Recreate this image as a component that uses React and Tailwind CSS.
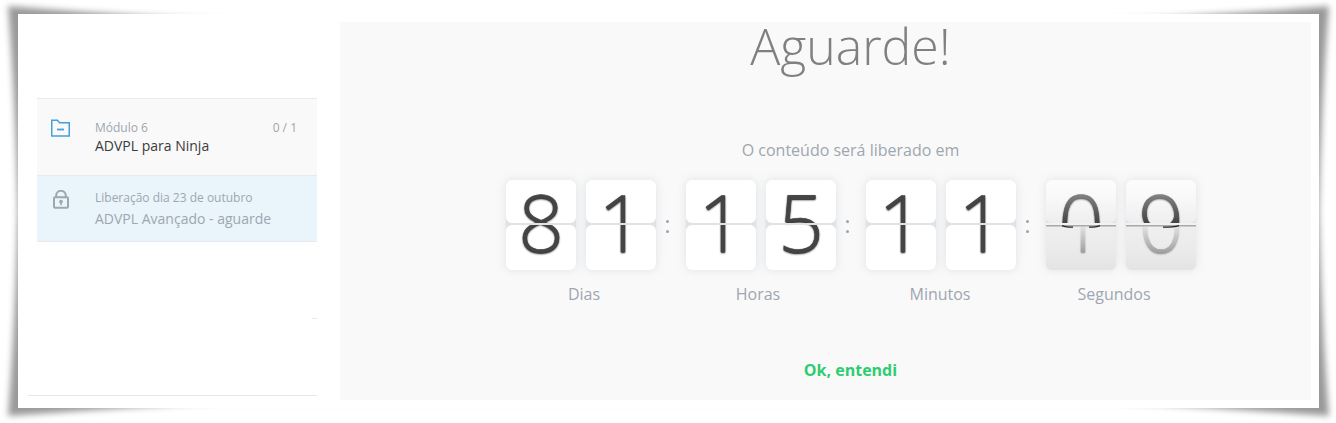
import clsx from "clsx";

const groups = [
  { label: "Dias", digits: ["8", "1"], labelClass: "pl-[6px]" },
  { label: "Horas", digits: ["1", "5"], labelClass: "pr-[6px]" },
  { label: "Minutos", digits: ["1", "1"], labelClass: "pr-[2px]" },
  { label: "Segundos", flipping: true, digits: ["0", "9"], next: ["1", "0"], labelClass: "pr-[14px]" },
];

const digitText =
  "block h-[90px] w-[70px] shrink-0 text-center text-[80px] leading-[82px] font-light text-[#444] [text-shadow:0_1px_2px_#000] [-webkit-text-stroke:0.6px_#444]";

// ─── Page curl shadow ─────────────────────────────────────────────────────────
function CurlShadow() {
  return (
    <svg className="absolute inset-0 h-full w-full" viewBox="0 0 1336 423">
      <defs>
        <filter id="soft" x="-5%" y="-5%" width="110%" height="110%">
          <feGaussianBlur stdDeviation="3" />
        </filter>
      </defs>
      <path
        d="M8 6 Q90 13 220 20 H1116 Q1246 13 1329 6 Q1322 90 1319 211 Q1322 330 1329 416 Q1246 410 1116 402 H220 Q90 410 8 416 Q15 330 18 211 Q15 90 8 6Z"
        fill="#000"
        fillOpacity="0.4"
        filter="url(#soft)"
      />
    </svg>
  );
}

// ─── Flip card ────────────────────────────────────────────────────────────────
function FlipCard({ digit, next, flipping }) {
  return (
    <div className="relative h-[90px] w-[70px] rounded-md bg-[#dfe3e7] shadow-[0_0_10px_rgba(150,165,180,0.25)]">
      <div
        className={clsx(
          "h-[43px] overflow-hidden rounded-md",
          flipping ? "bg-linear-to-b from-[#fafafa] to-[#eeeeee]" : "bg-white"
        )}
      >
        <span className={digitText}>{digit}</span>
      </div>
      <div
        className={clsx(
          "mt-[2px] flex h-[45px] flex-col justify-end overflow-hidden rounded-md",
          flipping ? "bg-linear-to-b from-[#f1f1f1] to-[#e3e3e3]" : "bg-white"
        )}
      >
        <span className={digitText}>{next ?? digit}</span>
      </div>
      {flipping && (
        <>
          <div className="absolute inset-x-0 top-0 h-[43px] rounded-t-md bg-linear-to-b from-white/50 to-transparent" />
          <div className="absolute inset-x-0 top-[45px] h-[45px] rounded-b-md bg-linear-to-b from-[#eee]/95 to-[#e4e4e4]/30" />
          <div className="absolute inset-x-0 top-[43px] h-[4px] border-t-2 border-b border-t-[#f2f2f2] border-b-[#c9c9c9] bg-[#aaa]" />
          {/* lower half of the falling leaf, almost edge-on */}
          <svg className="absolute top-[45px] left-0 h-[3px] w-[70px]" viewBox="0 0 70 3" fill="none" stroke="#222" strokeWidth="1.2">
            {digit === "0" ? <path d="M16 .6Q20 2.2 27 2.2M43 2.2Q50 2.2 54 .6" /> : <path d="M37 2.2Q48 2.2 53 .6" />}
          </svg>
        </>
      )}
    </div>
  );
}

function Separator() {
  return (
    <div className="flex w-[30px] flex-col items-start gap-[7px] pt-[40px] pl-[10px]">
      <i className="size-[3px] rounded-full bg-[#9aa4b0]" />
      <i className="size-[3px] rounded-full bg-[#9aa4b0]" />
    </div>
  );
}

// ─── Sidebar ──────────────────────────────────────────────────────────────────
function Sidebar() {
  return (
    <aside className="flex w-[322px] shrink-0 flex-col pt-[84px]">
      <div className="ml-[19px] w-[280px] border-y border-[#e8eaef] text-[#9ea6b0]">
        <div className="flex h-[77px] border-b border-[#e6eaef] bg-[#f9f9f9] pt-[20px]">
          <svg className="ml-[14px] h-[18px] w-[19px]" viewBox="0 0 19 18" fill="none" stroke="#459fdb" strokeWidth="1.5">
            <path d="M.75 1.25H6.5L8.5 3.75H18.25V17H.75Z" />
            <path d="M6 10.5H13" strokeWidth="1.8" />
          </svg>
          <div className="ml-[25px] flex-1">
            <div className="flex justify-between pr-5 text-[12px] leading-[18px]">
              <span>Módulo 6</span>
              <span>0 / 1</span>
            </div>
            <p className="text-[14px] leading-[18px] text-[#3b3b3b]">ADVPL para Ninja</p>
          </div>
        </div>
        <div className="flex h-[65px] bg-[#e9f4fb] pt-[14px]">
          <svg className="ml-[16px] h-[19px] w-[16px]" viewBox="0 0 16 19" fill="none" stroke="#9ea6b0" strokeWidth="2">
            <rect x="1" y="7.2" width="14" height="10.6" rx="1" />
            <path d="M3.2 7.2V5.4A4.8 4.6 0 0 1 12.8 5.4V7.2" />
            <circle cx="8" cy="11.6" r="1.9" fill="#9ea6b0" stroke="none" />
            <path d="M8 12V15.2" strokeWidth="1.6" />
          </svg>
          <div className="ml-[26px]">
            <p className="text-[12px] leading-[16px]">Liberação dia 23 de outubro</p>
            <p className="mt-[4px] text-[14px] leading-[18px]">ADVPL Avançado - aguarde</p>
          </div>
        </div>
      </div>
      <div className="mt-[76px] ml-[294px] h-px w-[5px] bg-[#e8e8e8]" />
      <div className="mt-[76px] ml-[10px] h-px w-[289px] bg-[#e8e8e8]" />
    </aside>
  );
}

// ─── Main ─────────────────────────────────────────────────────────────────────
export default function App() {
  return (
    <div className="relative h-[423px] w-[1336px] overflow-hidden bg-white px-[18px] pt-[14px] font-['Open_Sans',sans-serif]">
      <CurlShadow />
      <div className="relative flex h-[394px] w-[1301px] bg-white">
        <Sidebar />
        <main className="mt-[8px] flex h-[378px] w-[971px] flex-col bg-[#f9f9f9] text-[#9ea6b0]">
          <h1 className="mt-[-12px] mb-px pl-[50px] text-center text-[50px] leading-[72px] font-light text-[#808080]">
            Aguarde!
          </h1>
          <p className="mt-[55px] pl-[50px] text-center text-[16px] leading-[24px]">O conteúdo será liberado em</p>
          <div className="mt-[18px] ml-[166px] flex">
            {groups.map((g, i) => (
              <div key={g.label} className="flex">
                <div className="w-[150px]">
                  <div className="flex gap-[10px]">
                    {g.digits.map((d, j) => (
                      <FlipCard key={j} digit={d} next={g.next?.[j]} flipping={g.flipping} />
                    ))}
                  </div>
                  <p className={clsx("mt-[12px] text-center text-[16px] leading-[24px]", g.labelClass)}>{g.label}</p>
                </div>
                {i < groups.length - 1 && <Separator />}
              </div>
            ))}
          </div>
          <p className="mt-[52px] pl-[50px] text-center text-[16px] leading-[24px] font-bold text-[#2ecc71]">Ok, entendi</p>
        </main>
      </div>
    </div>
  );
}
